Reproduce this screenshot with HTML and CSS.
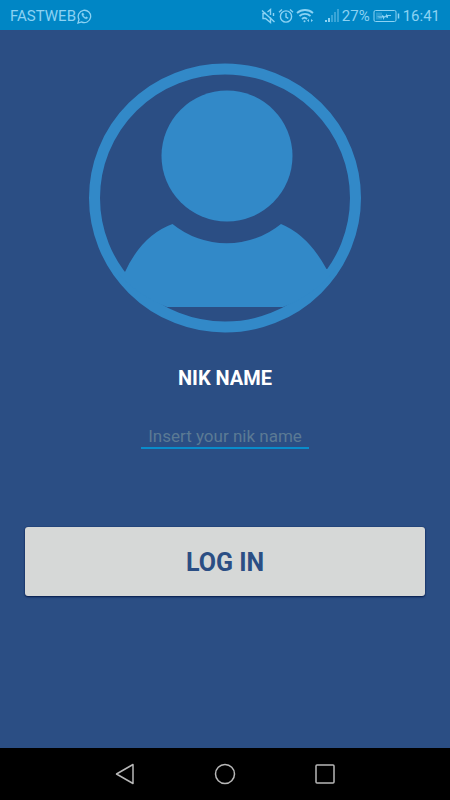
FILE: index.html
```html
<!DOCTYPE html>
<html lang="en">
<head>
  <meta charset="UTF-8">
  <meta name="viewport" content="width=device-width, initial-scale=1">
  <title>Log in</title>
  <link rel="stylesheet" href="styles.css">
</head>
<body>
  <header class="status-bar">
    <div class="carrier">
      <span>FASTWEB</span>
      <svg width="15" height="15" viewBox="0 0 15 15" fill="none" stroke="currentColor" stroke-width="1.3">
        <path d="M1 14l1-3.6a6.2 6.2 0 1 1 2.5 2.5z"/>
        <path d="M5 4.3c-.6 1 .1 2.6 1.4 3.9s2.9 2 3.8 1.4l.5-1-1.5-.8-.8.7c-1-.4-1.7-1.1-2.1-2.1l.6-.8-.8-1.5z" fill="currentColor" stroke-width=".4"/>
      </svg>
    </div>
    <div class="indicators">
      <svg width="15" height="16" viewBox="0 0 15 16" fill="none" stroke="currentColor" stroke-width="1.4">
        <path d="M5 5.5H2v5h2.5l5 4V9.500M6.500 4l3-2.500V7"/>
        <path d="M1 2.500l12.500 11.500M12.500 5v3"/>
      </svg>
      <svg width="16" height="16" viewBox="0 0 16 16" fill="none" stroke="currentColor" stroke-width="1.4">
        <circle cx="8" cy="8.5" r="5.6"/>
        <path d="M8 5v4l2.3 1.3M1 4.2L4 1.5M15 4.2L12 1.5"/>
      </svg>
      <svg width="18" height="16" viewBox="0 0 18 16" fill="none" stroke="currentColor" stroke-width="1.8">
        <path d="M1 5c4.500-4 11.500-4 16 0M3.500 8c3.200-2.800 7.800-2.800 11 0M6 11c1.600-1.500 3.500-1.500 5 0"/>
        <circle cx="8.500" cy="13.300" r="1" fill="currentColor" stroke="none"/>
        <path d="M11 12.500l2-1.500v3zM17 12.500L15 11v3z" fill="currentColor" stroke="none"/>
      </svg>
      <svg class="signal" width="16" height="16" viewBox="0 0 16 16" fill="currentColor">
        <path d="M1 12h2v2H1zM4 10h2v4H4z"/>
        <path d="M7 7h2v7H7zM10 4h2v10h-2zM13 1h2v13h-2z" opacity=".4"/>
      </svg>
      <span>27%</span>
      <svg class="battery" width="27" height="14" viewBox="0 0 27 14" fill="none" stroke="currentColor">
        <rect x="1" y="1.5" width="22" height="11" rx="1.5"/>
        <path d="M3 3.5h6v7H3z" fill="currentColor" stroke="none" opacity=".3"/>
        <path d="M25.5 4.5v5" stroke-width="1.5"/>
        <path d="M4 7.500h5V6l3 1.500 2-3V6h4v1h-3v2l-3-1-2 3V8.500H6z" fill="currentColor" stroke="none"/>
      </svg>
      <span>16:41</span>
    </div>
  </header>

  <main class="login">
    <svg class="avatar" viewBox="0 0 272 270">
      <ellipse cx="136" cy="135" rx="130.5" ry="129" fill="none" stroke="#3289c8" stroke-width="11"/>
      <circle cx="138" cy="93" r="65.5" fill="#3289c8"/>
      <path d="M83.5 161A86 86 0 0 0 192 161Q219 172 237.5 206L247 206A130 130 0 0 1 194 244H78A130 130 0 0 1 28 209H36Q53 172 83.5 161z" fill="#3289c8"/>
    </svg>
    <form class="login-form" onsubmit="return false">
      <label for="nickname">NIK NAME</label>
      <input type="text" id="nickname" placeholder="Insert your nik name">
      <button type="submit">LOG IN</button>
    </form>
  </main>

  <nav class="nav-bar">
    <button type="button" aria-label="Back">
      <svg width="22" height="22" viewBox="0 0 22 22"><path d="M2.5 11L19 1.5v19z"/></svg>
    </button>
    <button type="button" aria-label="Home">
      <svg width="22" height="22" viewBox="0 0 22 22"><circle cx="11" cy="11" r="9.5"/></svg>
    </button>
    <button type="button" aria-label="Recent apps">
      <svg width="22" height="22" viewBox="0 0 22 22"><rect x="2" y="2" width="18" height="18" rx="1"/></svg>
    </button>
  </nav>
</body>
</html>
```
FILE: styles.css
```css
* {
  box-sizing: border-box;
}
body {
  margin: 0;
  min-height: 100vh;
  display: flex;
  flex-direction: column;
  background: #2b4e84;
  font-family: Roboto, sans-serif;
}
.status-bar {
  display: flex;
  justify-content: space-between;
  align-items: center;
  height: 30px;
  padding: 2px 10px 0;
  background: #0086c5;
  color: #8bd2f3;
  font-size: 15px;
}
.carrier,
.indicators {
  display: flex;
  align-items: center;
  gap: 2px;
}
.carrier {
  gap: 1px;
}
.signal {
  margin-left: 8px;
}
.battery {
  margin: 0 1px;
}
.login {
  flex: 1;
  display: flex;
  flex-direction: column;
  align-items: center;
  padding: 33px 25px;
}
.avatar {
  width: 68%;
  max-width: 272px;
}
.login-form {
  width: 100%;
  display: flex;
  flex-direction: column;
  align-items: center;
}
.login-form label {
  margin-top: 33px;
  color: #fff;
  font-size: 20px;
  line-height: 24px;
  font-weight: bold;
}
.login-form input {
  width: 168px;
  margin-top: 35px;
  padding: 0;
  border: none;
  border-bottom: 2px solid #0a8ccb;
  outline: none;
  background: none;
  color: #fff;
  font-family: inherit;
  font-size: 17px;
  line-height: 22px;
  text-align: center;
}
.login-form input::placeholder {
  color: #5b7a94;
  opacity: 1;
}
.login-form button {
  width: 100%;
  margin-top: 78px;
  padding: 21px 20px 19px;
  border: none;
  border-radius: 3px;
  background: #d6d8d7;
  box-shadow: 0 1px 2px #041a4b, 0 0 1px #041a4b;
  color: #2b4e84;
  font-family: inherit;
  font-size: 25px;
  line-height: 29px;
  font-weight: bold;
  cursor: pointer;
}
.nav-bar {
  display: flex;
  justify-content: center;
  align-items: center;
  gap: 78px;
  height: 52px;
  background: #000;
}
.nav-bar button {
  display: flex;
  padding: 0;
  border: none;
  background: none;
  cursor: pointer;
}
.nav-bar svg {
  fill: none;
  stroke: #b8b8b8;
  stroke-width: 1.5;
  stroke-linejoin: round;
}
```
